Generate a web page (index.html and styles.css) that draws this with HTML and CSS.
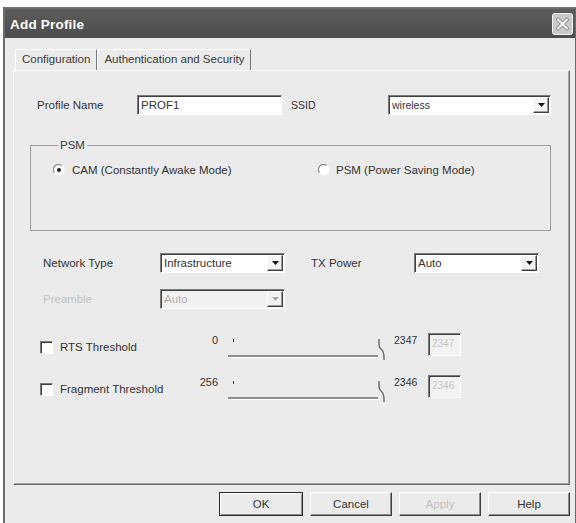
FILE: index.html
```html
<!DOCTYPE html>
<html lang="en">
<head>
<meta charset="utf-8">
<title>Add Profile</title>
<link rel="stylesheet" href="styles.css">
</head>
<body>
<div class="dialog">
  <div class="titlebar">
    <span class="title">Add Profile</span>
    <span class="close" aria-label="Close">
      <svg width="21" height="22" viewBox="0 0 21 22">
        <rect x="0.5" y="0.5" width="20" height="21" rx="2" fill="#c9c9c9" stroke="#f2f2f2"/>
        <path d="M6 6.5l9 9M15 6.5l-9 9" stroke="#7a7a7a" stroke-width="3.6" stroke-linecap="round"/>
        <path d="M6 6.5l9 9M15 6.5l-9 9" stroke="#fff" stroke-width="2" stroke-linecap="round"/>
      </svg>
    </span>
  </div>

  <div class="client">
    <div class="tabs">
      <div class="tab active">Configuration</div>
      <div class="tab">Authentication and Security</div>
    </div>

    <div class="panel">
      <div class="row row-profile">
        <span class="lbl lbl-profile">Profile Name</span>
        <div class="field edit edit-profile">PROF1</div>
        <span class="lbl lbl-ssid">SSID</span>
        <div class="field combo combo-ssid">
          <span class="combo-text">wireless</span>
          <span class="combo-btn"><svg width="7" height="4" viewBox="0 0 7 4"><path d="M0 0h7L3.5 4z" fill="#111"/></svg></span>
        </div>
      </div>

      <fieldset class="group">
        <legend>PSM</legend>
        <div class="radios">
          <div class="radio-item cam">
            <svg class="radio" width="12" height="12" viewBox="0 0 12 12">
              <circle cx="6" cy="6" r="5.5" fill="#fff"/>
              <path d="M1.5 8.5A5 5 0 0 1 8.5 1.5" stroke="#8a8a8a" stroke-width="1.2" fill="none"/>
              <circle cx="6" cy="6" r="2" fill="#222"/>
            </svg>
            <span>CAM (Constantly Awake Mode)</span>
          </div>
          <div class="radio-item psm">
            <svg class="radio" width="12" height="12" viewBox="0 0 12 12">
              <circle cx="6" cy="6" r="5.5" fill="#fff"/>
              <path d="M1.5 8.5A5 5 0 0 1 8.5 1.5" stroke="#8a8a8a" stroke-width="1.2" fill="none"/>
            </svg>
            <span>PSM (Power Saving Mode)</span>
          </div>
        </div>
      </fieldset>

      <div class="row row-network">
        <span class="lbl lbl-left">Network Type</span>
        <div class="field combo combo-mid">
          <span class="combo-text">Infrastructure</span>
          <span class="combo-btn"><svg width="7" height="4" viewBox="0 0 7 4"><path d="M0 0h7L3.5 4z" fill="#111"/></svg></span>
        </div>
        <span class="lbl lbl-tx">TX Power</span>
        <div class="field combo combo-mid">
          <span class="combo-text">Auto</span>
          <span class="combo-btn"><svg width="7" height="4" viewBox="0 0 7 4"><path d="M0 0h7L3.5 4z" fill="#111"/></svg></span>
        </div>
      </div>

      <div class="row row-preamble">
        <span class="lbl lbl-left disabled">Preamble</span>
        <div class="field combo combo-mid combo-disabled">
          <span class="combo-text">Auto</span>
          <span class="combo-btn"><svg width="7" height="4" viewBox="0 0 7 4"><path d="M0 0h7L3.5 4z" fill="#a8a8a8"/></svg></span>
        </div>
      </div>

      <div class="row threshold row-rts">
        <div class="check-wrap">
          <span class="checkbox"></span>
          <span class="check-label">RTS Threshold</span>
        </div>
        <span class="min-val">0</span>
        <div class="slider">
          <span class="tick"></span>
          <span class="track"></span>
          <svg class="thumb" width="9" height="23" viewBox="0 0 9 23">
            <path d="M2 1C2 7 1.5 9 4.5 11.5C7.5 14 7 17 7 22" stroke="#6a6a6a" stroke-width="1.4" fill="none"/>
          </svg>
        </div>
        <span class="max-val">2347</span>
        <div class="field num-box">2347</div>
      </div>

      <div class="row threshold row-frag">
        <div class="check-wrap">
          <span class="checkbox"></span>
          <span class="check-label">Fragment Threshold</span>
        </div>
        <span class="min-val">256</span>
        <div class="slider">
          <span class="tick"></span>
          <span class="track"></span>
          <svg class="thumb" width="9" height="23" viewBox="0 0 9 23">
            <path d="M2 1C2 7 1.5 9 4.5 11.5C7.5 14 7 17 7 22" stroke="#6a6a6a" stroke-width="1.4" fill="none"/>
          </svg>
        </div>
        <span class="max-val">2346</span>
        <div class="field num-box">2346</div>
      </div>
    </div>

    <div class="buttons">
      <button class="btn btn-default">OK</button>
      <button class="btn">Cancel</button>
      <button class="btn btn-disabled">Apply</button>
      <button class="btn">Help</button>
    </div>
  </div>
</div>
</body>
</html>
```

FILE: styles.css
```css
html, body {
  margin: 0;
  padding: 0;
  background: #ffffff;
  overflow: hidden;
}

body {
  font-family: "Liberation Sans", Arial, sans-serif;
  font-size: 11.5px;
  color: #333333;
}

/* window frame */
.dialog {
  margin: 7px 0 0 3px;
  width: 574px;
  height: 530px;
  box-sizing: border-box;
  background: #ebebeb;
  border-left: 2px solid #6c6c6c;
  border-right: 2px solid #6c6c6c;
  display: flex;
  flex-direction: column;
}

.titlebar {
  height: 31px;
  box-sizing: border-box;
  padding: 3px 2px 0 5px;
  display: flex;
  align-items: center;
  justify-content: space-between;
  background: linear-gradient(#7a7a7a 0, #5c5c5c 3px, #535353 60%, #4c4c4c 100%);
}

.title {
  color: #ffffff;
  font-weight: bold;
  font-size: 13.5px;
  letter-spacing: 0.2px;
}

.close {
  display: block;
  width: 21px;
  height: 22px;
}

.close svg {
  display: block;
}

/* client area */
.client {
  display: flex;
  flex-direction: column;
}

.tabs {
  display: flex;
  margin: 11px 0 0 10px;
  height: 21px;
}

.tab {
  height: 21px;
  box-sizing: border-box;
  line-height: 19px;
  padding: 0 6px;
  border-top: 1px solid #ffffff;
  border-left: 1px solid #ffffff;
  border-right: 1px solid #767676;
  color: #3a3a3a;
  white-space: nowrap;
}

.panel {
  margin-left: 8px;
  width: 557px;
  height: 415px;
  box-sizing: border-box;
  border: 1px solid;
  border-color: #ffffff #6e6e6e #6e6e6e #ffffff;
  box-shadow: inset -1px -1px 0 #a4a4a4;
  display: flex;
  flex-direction: column;
}

.row {
  display: flex;
  align-items: center;
  height: 20px;
}

.lbl {
  white-space: nowrap;
}

.disabled {
  color: #c2c2c2;
}

/* sunken edit and combo fields */
.field {
  box-sizing: border-box;
  height: 20px;
  background: #ffffff;
  border: 1px solid;
  border-color: #7b7b7b #ffffff #ffffff #7b7b7b;
  box-shadow: inset 1px 1px 0 #404040;
}

.edit {
  line-height: 18px;
  padding-left: 3px;
}

.combo {
  display: flex;
  align-items: center;
  padding: 1px 1px 1px 2px;
}

.combo-text {
  flex: 1;
  padding-left: 1px;
  white-space: nowrap;
}

.combo-btn {
  width: 16px;
  height: 16px;
  box-sizing: border-box;
  display: flex;
  align-items: center;
  justify-content: center;
  background: #f4f4f4;
  border: 1px solid;
  border-color: #ffffff #404040 #404040 #ffffff;
  box-shadow: inset -1px -1px 0 #9a9a9a;
}

.combo-btn svg {
  display: block;
}

.combo-disabled {
  background: #f1f1f1;
  color: #b4b4b4;
}

.combo-disabled .combo-btn {
  background: #f1f1f1;
}

/* profile row */
.row-profile {
  margin-top: 24px;
  padding-left: 23px;
}

.lbl-profile {
  width: 100px;
}

.edit-profile {
  width: 145px;
}

.lbl-ssid {
  margin-left: 9px;
  width: 97px;
  font-size: 10.5px;
}

.combo-ssid {
  width: 163px;
}

.combo-ssid .combo-text {
  font-size: 10.5px;
}

/* power save group */
.group {
  margin: 23px 0 0 16px;
  width: 521px;
  min-width: 0;
  box-sizing: border-box;
  padding: 11px 0 53px 22px;
  border: 1px solid #9c9c9c;
}

.group legend {
  margin-left: 5px;
  padding: 0 2px;
  line-height: 14px;
  color: #3a3a3a;
}

.radios {
  display: flex;
  height: 14px;
  align-items: center;
}

.radio-item {
  display: flex;
  align-items: center;
  white-space: nowrap;
}

.radio-item.cam {
  width: 265px;
}

.radio {
  display: block;
  margin-right: 7px;
}

.psm .radio {
  margin-right: 6px;
}

/* network rows */
.row-network {
  margin-top: 22px;
  padding-left: 29px;
}

.row-preamble {
  margin-top: 16px;
  padding-left: 29px;
}

.lbl-left {
  width: 117px;
}

.combo-mid {
  width: 125px;
}

.lbl-tx {
  margin-left: 26px;
  width: 103px;
}

/* threshold rows with slider */
.threshold {
  height: 24px;
  align-items: flex-start;
  padding-left: 26px;
}

.row-rts {
  margin-top: 24px;
}

.row-frag {
  margin-top: 18px;
}

.check-wrap {
  width: 140px;
  display: flex;
  align-items: center;
  margin-top: 7px;
  height: 14px;
}

.checkbox {
  width: 13px;
  height: 13px;
  box-sizing: border-box;
  background: #ffffff;
  border: 1px solid;
  border-color: #7b7b7b #ffffff #ffffff #7b7b7b;
  box-shadow: inset 1px 1px 0 #404040;
  margin-right: 7px;
  flex: none;
}

.check-label {
  white-space: nowrap;
}

.min-val {
  width: 38px;
  text-align: right;
  line-height: 14px;
  font-size: 11px;
}

.slider {
  position: relative;
  margin-left: 10px;
  width: 158px;
  height: 27px;
  display: flex;
  flex-direction: column;
}

.tick {
  display: block;
  width: 1px;
  height: 3px;
  background: #3a3a3a;
  margin: 6px 0 0 5px;
}

.track {
  display: block;
  width: 150px;
  height: 2px;
  margin-top: 13px;
  background: #8e8e8e;
  border-bottom: 1px solid #ffffff;
}

.thumb {
  position: absolute;
  left: 149px;
  top: 5px;
}

.max-val {
  margin-left: 8px;
  width: 30px;
  line-height: 14px;
  font-size: 10.5px;
}

.num-box {
  margin-left: 4px;
  width: 33px;
  height: 23px;
  background: #f2f2f2;
  color: #c4c4c4;
  font-size: 10px;
  line-height: 19px;
  padding-left: 3px;
}

/* dialog buttons */
.buttons {
  margin: 7px 0 0 8px;
  width: 557px;
  display: flex;
  justify-content: flex-end;
  gap: 7px;
}

.btn {
  width: 82px;
  height: 24px;
  box-sizing: border-box;
  font-family: "Liberation Sans", Arial, sans-serif;
  font-size: 11.5px;
  color: #333333;
  background: #ebebeb;
  border: 1px solid;
  border-color: #ffffff #404040 #404040 #ffffff;
  box-shadow: inset -1px -1px 0 #8c8c8c;
  padding: 0;
}

.btn-default {
  width: 84px;
  border-color: #2a2a2a;
  box-shadow: inset 1px 1px 0 #ffffff, inset -1px -1px 0 #8c8c8c;
}

.btn-disabled {
  color: #c0c0c0;
}
```
